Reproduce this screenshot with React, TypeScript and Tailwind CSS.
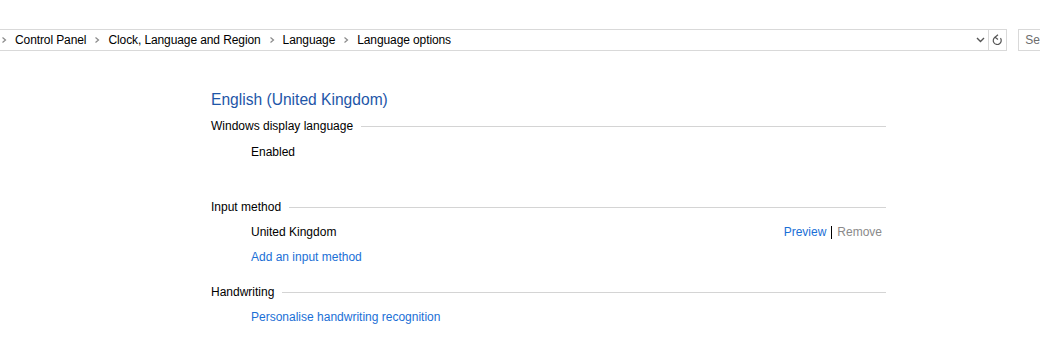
import React from "react";

const Chevron = () => (
  <svg width="6" height="8" viewBox="0 0 6 8" className="shrink-0">
    <path d="M1.5 1.5 L4.5 4 L1.5 6.5" fill="none" stroke="#8a8a8a" strokeWidth="1.2" />
  </svg>
);

const SectionHeader = ({ title }: { title: string }) => (
  <div className="flex items-center gap-2 h-[16px]">
    <span className="text-[#000000] whitespace-nowrap">{title}</span>
    <div className="flex-1 h-px bg-[#d4d4d4]" />
  </div>
);

const crumbs = ["Control Panel", "Clock, Language and Region", "Language", "Language options"];

export default function App() {
  return (
    <div className="w-[1040px] h-[363px] bg-white text-[12px] overflow-hidden font-['Liberation_Sans',Arial,sans-serif] text-[#000]">
      {/* address bar */}
      <div className="flex items-center pt-[29px] h-[51px]">
        <div className="flex items-center w-[1008px] h-[22px] border border-l-0 border-[#d9d9d9]">
          <div className="flex items-center flex-1 gap-[8px] pl-[1px] tracking-[-0.1px]">
            {crumbs.map((c, i) => (
              <React.Fragment key={i}>
                <Chevron />
                <span className="whitespace-nowrap">{c}</span>
              </React.Fragment>
            ))}
          </div>
          <div className="flex items-center justify-center w-[16px] h-full">
            <svg width="9" height="6" viewBox="0 0 9 6">
              <path d="M1 1 L4.5 4.5 L8 1" fill="none" stroke="#555" strokeWidth="1.4" />
            </svg>
          </div>
          <div className="w-px h-full bg-[#d9d9d9]" />
          <div className="flex items-center justify-center w-[17px] h-full">
            <svg width="11" height="13" viewBox="0 0 11 13">
              <path d="M3 3.2 A4 4 0 1 0 8.5 4.2" fill="none" stroke="#555" strokeWidth="1.2" />
              <path d="M6 0.8 L3 3.2 L6 5.4" fill="none" stroke="#555" strokeWidth="1.2" />
            </svg>
          </div>
        </div>
        <div className="ml-[11px] flex items-center h-[22px] flex-1 border border-r-0 border-[#d9d9d9] pl-[6px] text-[#6d6d6d]">
          Se
        </div>
      </div>

      {/* content */}
      <div className="ml-[211px] w-[675px] pt-[39px]">
        <div className="text-[15.6px] text-[#1e56a8] leading-[20px]">English (United Kingdom)</div>

        <div className="mt-[8px]">
          <SectionHeader title="Windows display language" />
          <div className="pl-[40px] mt-[10px] leading-[16px]">Enabled</div>
        </div>

        <div className="mt-[39px]">
          <SectionHeader title="Input method" />
          <div className="pl-[40px] mt-[9px] flex items-center justify-between leading-[16px]">
            <span>United Kingdom</span>
            <span className="flex items-center gap-[5px] pr-[4px]">
              <span className="text-[#1a6fd6]">Preview</span>
              <span className="w-px h-[13px] bg-[#000]" />
              <span className="text-[#8a8a8a]">Remove</span>
            </span>
          </div>
          <div className="pl-[40px] mt-[9px] leading-[16px] text-[#1a6fd6]">Add an input method</div>
        </div>

        <div className="mt-[19px]">
          <SectionHeader title="Handwriting" />
          <div className="pl-[40px] mt-[9px] leading-[16px] text-[#1a6fd6]">Personalise handwriting recognition</div>
        </div>
      </div>
    </div>
  );
}
